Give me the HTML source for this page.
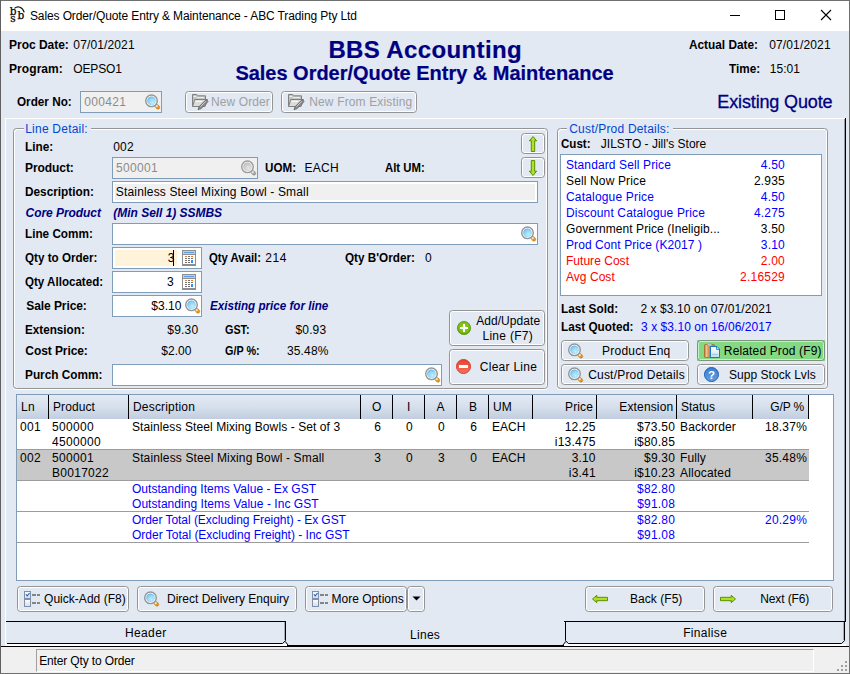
<!DOCTYPE html>
<html lang="en">
<head>
<meta charset="utf-8">
<title>Sales Order/Quote Entry &amp; Maintenance - ABC Trading Pty Ltd</title>
<style>
html,body{margin:0;padding:0;}
body{width:850px;height:674px;overflow:hidden;background:#e2e9f3;}
#w{position:relative;width:850px;height:674px;overflow:hidden;background:#e2e9f3;font-family:"Liberation Sans",sans-serif;font-size:12px;line-height:14px;color:#000;}
#w div{position:absolute;box-sizing:border-box;}
.t{position:absolute;white-space:pre;}
.b{font-weight:bold;}
.i{font-style:italic;}
.ic{position:absolute;overflow:visible;}
</style>
</head>
<body>
<div id="w">

<svg width="0" height="0" style="position:absolute">
<defs>
<radialGradient id="lens" cx="0.62" cy="0.7" r="0.85"><stop offset="0" stop-color="#bcf0fc"/><stop offset="0.55" stop-color="#92d4f6"/><stop offset="1" stop-color="#4aa0ea"/></radialGradient>
<radialGradient id="lensG" cx="0.62" cy="0.7" r="0.8"><stop offset="0" stop-color="#e6e6e6"/><stop offset="0.5" stop-color="#d2d2d2"/><stop offset="1" stop-color="#b4b4b4"/></radialGradient>
<linearGradient id="gUp" x1="0" x2="1" y1="0" y2="0"><stop offset="0" stop-color="#7cb404"/><stop offset="0.5" stop-color="#bce42c"/><stop offset="1" stop-color="#7cb404"/></linearGradient>
<linearGradient id="gLR" x1="0" x2="0" y1="0" y2="1"><stop offset="0" stop-color="#7cb404"/><stop offset="0.5" stop-color="#bce42c"/><stop offset="1" stop-color="#7cb404"/></linearGradient>
<radialGradient id="gPlus" cx="0.5" cy="0.45" r="0.6"><stop offset="0" stop-color="#94d41c"/><stop offset="0.7" stop-color="#78bc10"/><stop offset="1" stop-color="#4c8c08"/></radialGradient>
<linearGradient id="gMinus" x1="0" x2="0" y1="0" y2="1"><stop offset="0" stop-color="#e4442c"/><stop offset="1" stop-color="#f87060"/></linearGradient>
<linearGradient id="gHelp" x1="0" x2="0" y1="0" y2="1"><stop offset="0" stop-color="#3c7cd0"/><stop offset="1" stop-color="#60a0e0"/></linearGradient>
<linearGradient id="gBoard" x1="0" x2="1" y1="0" y2="0"><stop offset="0" stop-color="#c07830"/><stop offset="0.2" stop-color="#f0c090"/><stop offset="0.45" stop-color="#d08c48"/><stop offset="1" stop-color="#c88038"/></linearGradient>
<linearGradient id="gPage" x1="0" x2="0" y1="0" y2="1"><stop offset="0" stop-color="#ffffff"/><stop offset="1" stop-color="#c4e0f0"/></linearGradient>
<linearGradient id="gBox" x1="0" x2="0" y1="0" y2="1"><stop offset="0" stop-color="#ffffff"/><stop offset="1" stop-color="#d4dce8"/></linearGradient>
</defs></svg>
<div style="left:0px;top:0px;width:850px;height:31px;background:#fff;"></div>
<svg class="ic" style="left:9px;top:5px" width="18" height="18" viewBox="0 0 18 18"><path d="M5.4 3.4 C8.8 0.6 13.6 1.8 15.2 7.4" fill="none" stroke="#111" stroke-width="1.2"/><g font-family="DejaVu Serif, serif" fill="#000" stroke="#000" stroke-width="0.25"><text x="0.8" y="9.8" font-size="10.5">b</text><text x="8.4" y="14" font-size="10.5">b</text><text x="1.2" y="17" font-size="10.5">s</text></g></svg>
<span class="t" style="left:29.96px;top:9px;letter-spacing:-0.112px;color:#000;">Sales Order/Quote Entry &amp; Maintenance - ABC Trading Pty Ltd</span>
<svg class="ic" style="left:719px;top:0" width="130" height="31" viewBox="0 0 130 31"><path d="M11 15.5H21" stroke="#000" stroke-width="1"/><rect x="56.5" y="10.5" width="9" height="9" fill="none" stroke="#000" stroke-width="1"/><path d="M102 10L112 20M112 10L102 20" stroke="#000" stroke-width="1.1"/></svg>
<span class="t b" style="left:9.00px;top:38px;letter-spacing:-0.018px;">Proc Date:</span>
<span class="t" style="left:73.33px;top:38px;letter-spacing:0.133px;">07/01/2021</span>
<span class="t b" style="left:9.00px;top:62px;letter-spacing:0.073px;">Program:</span>
<span class="t" style="left:73.23px;top:62px;letter-spacing:-0.120px;">OEPSO1</span>
<span class="t b" style="left:328.39px;top:36px;font-size:24px;line-height:27px;letter-spacing:0.376px;color:#000080;-webkit-text-stroke:0.2px #000080;">BBS Accounting</span>
<span class="t b" style="left:235.42px;top:62px;font-size:20px;line-height:22px;letter-spacing:-0.020px;color:#000080;-webkit-text-stroke:0.2px #000080;">Sales Order/Quote Entry &amp; Maintenance</span>
<span class="t b" style="left:688.91px;top:38px;transform:scaleX(0.9845);transform-origin:0 0;">Actual Date:</span>
<span class="t" style="left:769.13px;top:38px;letter-spacing:0.155px;">07/01/2021</span>
<span class="t b" style="left:729.47px;top:62px;transform:scaleX(0.9800);transform-origin:0 0;">Time:</span>
<span class="t" style="left:769.69px;top:62px;letter-spacing:0.068px;">15:01</span>
<span class="t" style="left:717.32px;top:92px;font-size:18px;line-height:20px;letter-spacing:-0.137px;color:#000080;-webkit-text-stroke:0.3px #000080;">Existing Quote</span>
<span class="t b" style="left:17.12px;top:95px;transform:scaleX(0.9769);transform-origin:0 0;">Order No:</span>
<div style="left:80px;top:91px;width:82px;height:22px;border:1px solid #7f9db9;background:#f0f0f0;"></div>
<span class="t" style="left:84.13px;top:95px;letter-spacing:0.362px;color:#8c8c8c;">000421</span>
<svg class="ic" style="left:145px;top:94px" width="16" height="16" viewBox="0 0 16 16"><path d="M10.2 10.5 L12.2 12.5" stroke="#bcbcbc" stroke-width="2.6"/><ellipse cx="12.5" cy="12.9" rx="2.5" ry="1.9" transform="rotate(45 12.5 12.9)" fill="#e4941c" stroke="#b87814" stroke-width="0.5"/><circle cx="11.7" cy="12.1" r="1.2" fill="#eee6dc"/><circle cx="6.5" cy="6.8" r="5.8" fill="#fdfdfd" stroke="#959595" stroke-width="1.45"/><circle cx="6.5" cy="6.8" r="4.35" fill="url(#lens)"/></svg>
<div style="left:185px;top:91px;width:88px;height:22px;border:1px solid #959595;border-radius:3.5px;box-shadow:inset 0 0 0 1px #fff;"></div>
<svg class="ic" style="left:192px;top:94px" width="16" height="16" viewBox="0 0 16 16"><path d="M0.5 12.5 V0.5 H4.6 L5.6 1.8 H13.5 V6" fill="#c2c2c2" stroke="#808080"/><path d="M1.5 2.5 H4 L5 3.6 H12" fill="none" stroke="#f0f0f0" stroke-width="1"/><path d="M0.6 12.5 L2.8 5.5 H15.5 L13 12.5 Z" fill="#dcdcdc" stroke="#808080"/><path d="M3.6 7.5 H10" stroke="#f8f8f8" stroke-width="1"/><path d="M14.2 5.6 L7.2 12.6 L6 15.6 L9.2 14.6 L16 7.6 Z" fill="#909090" stroke="#5c5c5c" stroke-width="0.8"/><path d="M13.6 7.4 L8.6 12.4" stroke="#d8d8d8" stroke-width="0.8"/></svg>
<span class="t" style="left:211.02px;top:95px;letter-spacing:0.096px;color:#a0a0a0;">New Order</span>
<div style="left:281px;top:91px;width:136px;height:22px;border:1px solid #959595;border-radius:3.5px;box-shadow:inset 0 0 0 1px #fff;"></div>
<svg class="ic" style="left:288px;top:94px" width="16" height="16" viewBox="0 0 16 16"><path d="M0.5 12.5 V0.5 H4.6 L5.6 1.8 H13.5 V6" fill="#c2c2c2" stroke="#808080"/><path d="M1.5 2.5 H4 L5 3.6 H12" fill="none" stroke="#f0f0f0" stroke-width="1"/><path d="M0.6 12.5 L2.8 5.5 H15.5 L13 12.5 Z" fill="#dcdcdc" stroke="#808080"/><path d="M3.6 7.5 H10" stroke="#f8f8f8" stroke-width="1"/><path d="M14.2 5.6 L7.2 12.6 L6 15.6 L9.2 14.6 L16 7.6 Z" fill="#909090" stroke="#5c5c5c" stroke-width="0.8"/><path d="M13.6 7.4 L8.6 12.4" stroke="#d8d8d8" stroke-width="0.8"/></svg>
<span class="t" style="left:309.22px;top:95px;letter-spacing:0.148px;color:#a0a0a0;">New From Existing</span>
<div style="left:5px;top:118px;width:841px;height:1px;background:#fff;"></div>
<div style="left:5px;top:118px;width:1px;height:527px;background:#fff;"></div>
<div style="left:845px;top:118px;width:1px;height:504px;background:#000;"></div>
<div style="left:844px;top:119px;width:1px;height:502px;background:#9a9ea6;"></div>
<div style="left:6px;top:621px;width:280px;height:1px;background:#000;"></div>
<div style="left:564px;top:621px;width:282px;height:1px;background:#000;"></div>
<div style="left:13px;top:128px;width:535px;height:261px;border:1px solid #959595;border-radius:3.5px;box-shadow:inset 1px 1px 0 0 #fff, inset -1px 0 0 0 #fff, 0 1px 0 0 #fff;"></div>
<div style="left:24px;top:126px;width:67px;height:6px;background:#e2e9f3;"></div>
<span class="t" style="left:25.22px;top:122px;letter-spacing:0.222px;color:#0046d5;">Line Detail:</span>
<span class="t b" style="left:25.01px;top:140px;transform:scaleX(0.9848);transform-origin:0 0;">Line:</span>
<span class="t" style="left:113.13px;top:140px;letter-spacing:0.326px;">002</span>
<span class="t b" style="left:25.00px;top:161px;letter-spacing:-0.068px;">Product:</span>
<div style="left:112px;top:157px;width:146px;height:22px;border:1px solid #7f9db9;background:#f0f0f0;"></div>
<span class="t" style="left:116.12px;top:161px;letter-spacing:0.326px;color:#8c8c8c;">500001</span>
<svg class="ic" style="left:241px;top:160px" width="16" height="16" viewBox="0 0 16 16"><path d="M10.2 10.5 L12.2 12.5" stroke="#bcbcbc" stroke-width="2.6"/><ellipse cx="12.5" cy="12.9" rx="2.5" ry="1.9" transform="rotate(45 12.5 12.9)" fill="#a4a4a4" stroke="#8c8c8c" stroke-width="0.5"/><circle cx="11.7" cy="12.1" r="1.2" fill="#e8e8e8"/><circle cx="6.5" cy="6.8" r="5.8" fill="#fafafa" stroke="#9c9c9c" stroke-width="1.45"/><circle cx="6.5" cy="6.8" r="4.35" fill="url(#lensG)"/></svg>
<span class="t b" style="left:264.80px;top:161px;transform:scaleX(0.9695);transform-origin:0 0;">UOM:</span>
<span class="t" style="left:304.42px;top:161px;letter-spacing:0.274px;">EACH</span>
<span class="t b" style="left:385.12px;top:161px;transform:scaleX(0.9449);transform-origin:0 0;">Alt UM:</span>
<div style="left:521px;top:133px;width:24px;height:21px;border:1px solid #959595;border-radius:3.5px;box-shadow:inset 0 0 0 1px #fff;"></div>
<svg class="ic" style="left:525px;top:136px" width="16" height="16" viewBox="0 0 16 16"><path d="M8 0.5 L11.7 4.8 L9.7 4.8 L9.7 15.5 L6.3 15.5 L6.3 4.8 L4.3 4.8 Z" fill="url(#gUp)" stroke="#5a9404" stroke-width="1" stroke-linejoin="round"/></svg>
<div style="left:521px;top:157px;width:24px;height:21px;border:1px solid #959595;border-radius:3.5px;box-shadow:inset 0 0 0 1px #fff;"></div>
<svg class="ic" style="left:525px;top:160px" width="16" height="16" viewBox="0 0 16 16"><g transform="rotate(180 8 8)"><path d="M8 0.5 L11.7 4.8 L9.7 4.8 L9.7 15.5 L6.3 15.5 L6.3 4.8 L4.3 4.8 Z" fill="url(#gUp)" stroke="#5a9404" stroke-width="1" stroke-linejoin="round"/></g></svg>
<span class="t b" style="left:25.01px;top:185px;transform:scaleX(0.9831);transform-origin:0 0;">Description:</span>
<div style="left:112px;top:181px;width:426px;height:22px;border:1px solid #7f9db9;background:#fff;"></div>
<div style="left:115px;top:184px;width:420px;height:16px;background:#f0f0f0;"></div>
<span class="t" style="left:115.86px;top:185px;letter-spacing:0.157px;">Stainless Steel Mixing Bowl - Small</span>
<span class="t b i" style="left:25.61px;top:206px;letter-spacing:-0.067px;color:#000080;">Core Product</span>
<span class="t b i" style="left:113.37px;top:206px;letter-spacing:-0.035px;color:#000080;">(Min Sell 1) SSMBS</span>
<span class="t b" style="left:25.01px;top:227px;transform:scaleX(0.9781);transform-origin:0 0;">Line Comm:</span>
<div style="left:112px;top:223px;width:426px;height:22px;border:1px solid #7f9db9;background:#fff;"></div>
<svg class="ic" style="left:521px;top:226px" width="16" height="16" viewBox="0 0 16 16"><path d="M10.2 10.5 L12.2 12.5" stroke="#bcbcbc" stroke-width="2.6"/><ellipse cx="12.5" cy="12.9" rx="2.5" ry="1.9" transform="rotate(45 12.5 12.9)" fill="#e4941c" stroke="#b87814" stroke-width="0.5"/><circle cx="11.7" cy="12.1" r="1.2" fill="#eee6dc"/><circle cx="6.5" cy="6.8" r="5.8" fill="#fdfdfd" stroke="#959595" stroke-width="1.45"/><circle cx="6.5" cy="6.8" r="4.35" fill="url(#lens)"/></svg>
<span class="t b" style="left:25.32px;top:251px;transform:scaleX(0.9709);transform-origin:0 0;">Qty to Order:</span>
<div style="left:112px;top:247px;width:90px;height:22px;border:1px solid #7f9db9;background:#fff;"></div>
<div style="left:115px;top:250px;width:62px;height:16px;background:#fff3dc;"></div>
<span class="t" style="left:167.65px;top:251px;letter-spacing:0.326px;">3</span>
<div style="left:173px;top:250px;width:1px;height:16px;background:#000;"></div>
<svg class="ic" style="left:182px;top:250px" width="14" height="16" viewBox="0 0 14 16"><rect x="0" y="0" width="14" height="16" fill="#8e8e8e"/><rect x="1" y="1" width="12" height="3" fill="#acd4fc"/><rect x="2" y="2" width="10" height="1" fill="#5c9ce8"/><rect x="1" y="5" width="12" height="9" fill="#fff"/><g fill="#f47820"><rect x="3" y="6" width="2" height="1"/><rect x="9" y="6" width="2" height="1"/></g><g fill="#707070"><rect x="6" y="6" width="2" height="1"/><rect x="3" y="8" width="2" height="1"/><rect x="6" y="8" width="2" height="1"/><rect x="9" y="8" width="2" height="1"/><rect x="3" y="10" width="2" height="1"/><rect x="6" y="10" width="2" height="1"/><rect x="3" y="12" width="2" height="1"/><rect x="6" y="12" width="2" height="1"/></g><rect x="9" y="10" width="2" height="3" fill="#3c8ce8"/></svg>
<span class="t b" style="left:208.94px;top:251px;transform:scaleX(0.9435);transform-origin:0 0;">Qty Avail:</span>
<span class="t" style="left:265.20px;top:251px;letter-spacing:0.567px;">214</span>
<span class="t b" style="left:345.12px;top:251px;transform:scaleX(0.9773);transform-origin:0 0;">Qty B'Order:</span>
<span class="t" style="left:424.93px;top:251px;letter-spacing:0.326px;">0</span>
<span class="t b" style="left:25.33px;top:275px;transform:scaleX(0.9649);transform-origin:0 0;">Qty Allocated:</span>
<div style="left:112px;top:271px;width:90px;height:22px;border:1px solid #7f9db9;background:#fff;"></div>
<span class="t" style="left:167.05px;top:275px;letter-spacing:0.326px;">3</span>
<svg class="ic" style="left:182px;top:274px" width="14" height="16" viewBox="0 0 14 16"><rect x="0" y="0" width="14" height="16" fill="#8e8e8e"/><rect x="1" y="1" width="12" height="3" fill="#acd4fc"/><rect x="2" y="2" width="10" height="1" fill="#5c9ce8"/><rect x="1" y="5" width="12" height="9" fill="#fff"/><g fill="#f47820"><rect x="3" y="6" width="2" height="1"/><rect x="9" y="6" width="2" height="1"/></g><g fill="#707070"><rect x="6" y="6" width="2" height="1"/><rect x="3" y="8" width="2" height="1"/><rect x="6" y="8" width="2" height="1"/><rect x="9" y="8" width="2" height="1"/><rect x="3" y="10" width="2" height="1"/><rect x="6" y="10" width="2" height="1"/><rect x="3" y="12" width="2" height="1"/><rect x="6" y="12" width="2" height="1"/></g><rect x="9" y="10" width="2" height="3" fill="#3c8ce8"/></svg>
<span class="t b" style="left:26.25px;top:299px;letter-spacing:-0.077px;">Sale Price:</span>
<div style="left:112px;top:295px;width:90px;height:22px;border:1px solid #7f9db9;background:#fff;"></div>
<span class="t" style="left:151.27px;top:299px;letter-spacing:0.042px;">$3.10</span>
<svg class="ic" style="left:185px;top:298px" width="16" height="16" viewBox="0 0 16 16"><path d="M10.2 10.5 L12.2 12.5" stroke="#bcbcbc" stroke-width="2.6"/><ellipse cx="12.5" cy="12.9" rx="2.5" ry="1.9" transform="rotate(45 12.5 12.9)" fill="#e4941c" stroke="#b87814" stroke-width="0.5"/><circle cx="11.7" cy="12.1" r="1.2" fill="#eee6dc"/><circle cx="6.5" cy="6.8" r="5.8" fill="#fdfdfd" stroke="#959595" stroke-width="1.45"/><circle cx="6.5" cy="6.8" r="4.35" fill="url(#lens)"/></svg>
<span class="t b i" style="left:209.80px;top:299px;color:#000080;transform:scaleX(0.9689);transform-origin:0 0;">Existing price for line</span>
<span class="t b" style="left:25.02px;top:323px;transform:scaleX(0.9750);transform-origin:0 0;">Extension:</span>
<span class="t" style="left:167.27px;top:323px;letter-spacing:0.192px;">$9.30</span>
<span class="t b" style="left:224.96px;top:323px;transform:scaleX(0.8994);transform-origin:0 0;">GST:</span>
<span class="t" style="left:295.47px;top:323px;letter-spacing:0.157px;">$0.93</span>
<span class="t b" style="left:25.31px;top:344px;letter-spacing:-0.081px;">Cost Price:</span>
<span class="t" style="left:161.27px;top:344px;letter-spacing:0.042px;">$2.00</span>
<span class="t b" style="left:224.96px;top:344px;transform:scaleX(0.8994);transform-origin:0 0;">G/P %:</span>
<span class="t" style="left:286.94px;top:344px;letter-spacing:0.157px;">35.48%</span>
<span class="t b" style="left:25.01px;top:368px;transform:scaleX(0.9841);transform-origin:0 0;">Purch Comm:</span>
<div style="left:112px;top:364px;width:330px;height:22px;border:1px solid #7f9db9;background:#fff;"></div>
<svg class="ic" style="left:425px;top:367px" width="16" height="16" viewBox="0 0 16 16"><path d="M10.2 10.5 L12.2 12.5" stroke="#bcbcbc" stroke-width="2.6"/><ellipse cx="12.5" cy="12.9" rx="2.5" ry="1.9" transform="rotate(45 12.5 12.9)" fill="#e4941c" stroke="#b87814" stroke-width="0.5"/><circle cx="11.7" cy="12.1" r="1.2" fill="#eee6dc"/><circle cx="6.5" cy="6.8" r="5.8" fill="#fdfdfd" stroke="#959595" stroke-width="1.45"/><circle cx="6.5" cy="6.8" r="4.35" fill="url(#lens)"/></svg>
<div style="left:449px;top:310px;width:96px;height:36px;border:1px solid #959595;border-radius:3.5px;box-shadow:inset 0 0 0 1px #fff;"></div>
<svg class="ic" style="left:457px;top:321px" width="14" height="14" viewBox="0 0 14 14"><circle cx="7" cy="7" r="6.6" fill="url(#gPlus)" stroke="#549410" stroke-width="0.8"/><path d="M7 3V11M3 7H11" stroke="#fff" stroke-width="2"/></svg>
<span class="t" style="left:476.18px;top:314px;letter-spacing:0.064px;">Add/Update</span>
<span class="t" style="left:482.42px;top:329px;letter-spacing:0.301px;">Line (F7)</span>
<div style="left:449px;top:349px;width:96px;height:36px;border:1px solid #959595;border-radius:3.5px;box-shadow:inset 0 0 0 1px #fff;"></div>
<svg class="ic" style="left:456px;top:359px" width="15" height="15" viewBox="0 0 15 15"><circle cx="7.5" cy="7.5" r="7" fill="url(#gMinus)" stroke="#d83c28" stroke-width="1"/><rect x="3" y="6" width="9" height="3" fill="#fff"/></svg>
<span class="t" style="left:479.79px;top:360px;letter-spacing:0.272px;">Clear Line</span>
<div style="left:557px;top:128px;width:271px;height:261px;border:1px solid #959595;border-radius:3.5px;box-shadow:inset 1px 1px 0 0 #fff, inset -1px 0 0 0 #fff, 0 1px 0 0 #fff;"></div>
<div style="left:567px;top:126px;width:106px;height:6px;background:#e2e9f3;"></div>
<span class="t" style="left:569.19px;top:122px;letter-spacing:0.200px;color:#0046d5;">Cust/Prod Details:</span>
<span class="t b" style="left:561.33px;top:137px;transform:scaleX(0.9616);transform-origin:0 0;">Cust:</span>
<span class="t" style="left:600.81px;top:137px;">JILSTO - Jill's Store</span>
<div style="left:560px;top:154px;width:262px;height:142px;border:1px solid #7f9db9;background:#fff;"></div>
<span class="t" style="left:566.00px;top:158px;letter-spacing:0.120px;color:#0000ff;">Standard Sell Price</span>
<span class="t" style="left:760.83px;top:158px;letter-spacing:0.161px;color:#0000ff;">4.50</span>
<span class="t" style="left:566.00px;top:174px;letter-spacing:0.141px;color:#000;">Sell Now Price</span>
<span class="t" style="left:753.90px;top:174px;letter-spacing:0.194px;color:#000;">2.935</span>
<span class="t" style="left:566.00px;top:190px;letter-spacing:0.174px;color:#0000ff;">Catalogue Price</span>
<span class="t" style="left:760.83px;top:190px;letter-spacing:0.161px;color:#0000ff;">4.50</span>
<span class="t" style="left:566.00px;top:206px;letter-spacing:0.150px;color:#0000ff;">Discount Catalogue Price</span>
<span class="t" style="left:753.90px;top:206px;letter-spacing:0.194px;color:#0000ff;">4.275</span>
<span class="t" style="left:566.00px;top:222px;letter-spacing:0.067px;color:#000;">Government Price (Ineligib...</span>
<span class="t" style="left:760.83px;top:222px;letter-spacing:0.161px;color:#000;">3.50</span>
<span class="t" style="left:566.00px;top:238px;letter-spacing:0.081px;color:#0000ff;">Prod Cont Price (K2017 )</span>
<span class="t" style="left:760.83px;top:238px;letter-spacing:0.161px;color:#0000ff;">3.10</span>
<span class="t" style="left:566.00px;top:254px;letter-spacing:0.028px;color:#ff0000;">Future Cost</span>
<span class="t" style="left:760.83px;top:254px;letter-spacing:0.161px;color:#ff0000;">2.00</span>
<span class="t" style="left:566.00px;top:270px;letter-spacing:0.039px;color:#ff0000;">Avg Cost</span>
<span class="t" style="left:740.00px;top:270px;letter-spacing:0.232px;color:#ff0000;">2.16529</span>
<span class="t b" style="left:561.01px;top:302px;transform:scaleX(0.9849);transform-origin:0 0;">Last Sold:</span>
<span class="t" style="left:640.40px;top:302px;letter-spacing:0.079px;">2 x $3.10 on 07/01/2021</span>
<span class="t b" style="left:561.01px;top:320px;transform:scaleX(0.9800);transform-origin:0 0;">Last Quoted:</span>
<span class="t" style="left:641.04px;top:320px;letter-spacing:0.051px;color:#0000ff;">3 x $3.10 on 16/06/2017</span>
<div style="left:561px;top:340px;width:128px;height:21px;border:1px solid #959595;border-radius:3.5px;box-shadow:inset 0 0 0 1px #fff;"></div>
<svg class="ic" style="left:568px;top:343px" width="16" height="16" viewBox="0 0 16 16"><path d="M10.2 10.5 L12.2 12.5" stroke="#bcbcbc" stroke-width="2.6"/><ellipse cx="12.5" cy="12.9" rx="2.5" ry="1.9" transform="rotate(45 12.5 12.9)" fill="#e4941c" stroke="#b87814" stroke-width="0.5"/><circle cx="11.7" cy="12.1" r="1.2" fill="#eee6dc"/><circle cx="6.5" cy="6.8" r="5.8" fill="#fdfdfd" stroke="#959595" stroke-width="1.45"/><circle cx="6.5" cy="6.8" r="4.35" fill="url(#lens)"/></svg>
<span class="t" style="left:602.12px;top:344px;letter-spacing:0.211px;">Product Enq</span>
<div style="left:697px;top:340px;width:128px;height:21px;background:#84da84;"></div>
<div style="left:697px;top:340px;width:128px;height:21px;border:1px solid #959595;border-radius:3.5px;box-shadow:inset 0 0 0 1px #fff;box-shadow:inset 0 0 0 1px #c4f0c4;border-color:#7c947c;"></div>
<svg class="ic" style="left:704px;top:343px" width="16" height="16" viewBox="0 0 16 16"><rect x="0.5" y="1.5" width="10" height="13" rx="0.8" fill="url(#gBoard)" stroke="#a86828" stroke-width="0.8"/><rect x="3.4" y="0.3" width="4.4" height="2.6" rx="0.8" fill="#c4c8d0" stroke="#9094a0" stroke-width="0.6"/><path d="M6.5 3.5 H13 L15.5 6 V14.5 H6.5 Z" fill="url(#gPage)" stroke="#1c74c4" stroke-width="1"/><path d="M12.6 3.8 V6.4 H15.2" fill="none" stroke="#1c74c4" stroke-width="0.9"/><path d="M8 11.5H14" stroke="#a4cce4" stroke-width="1.4"/></svg>
<span class="t" style="left:723.82px;top:344px;letter-spacing:0.147px;">Related Prod (F9)</span>
<div style="left:561px;top:364px;width:128px;height:21px;border:1px solid #959595;border-radius:3.5px;box-shadow:inset 0 0 0 1px #fff;"></div>
<svg class="ic" style="left:568px;top:367px" width="16" height="16" viewBox="0 0 16 16"><path d="M10.2 10.5 L12.2 12.5" stroke="#bcbcbc" stroke-width="2.6"/><ellipse cx="12.5" cy="12.9" rx="2.5" ry="1.9" transform="rotate(45 12.5 12.9)" fill="#e4941c" stroke="#b87814" stroke-width="0.5"/><circle cx="11.7" cy="12.1" r="1.2" fill="#eee6dc"/><circle cx="6.5" cy="6.8" r="5.8" fill="#fdfdfd" stroke="#959595" stroke-width="1.45"/><circle cx="6.5" cy="6.8" r="4.35" fill="url(#lens)"/></svg>
<span class="t" style="left:588.19px;top:368px;letter-spacing:0.198px;">Cust/Prod Details</span>
<div style="left:697px;top:364px;width:128px;height:21px;border:1px solid #959595;border-radius:3.5px;box-shadow:inset 0 0 0 1px #fff;"></div>
<svg class="ic" style="left:704px;top:367px" width="15" height="15" viewBox="0 0 15 15"><circle cx="7.5" cy="7.5" r="7" fill="url(#gHelp)" stroke="#1c5cbc" stroke-width="1"/><text x="7.6" y="11.6" text-anchor="middle" font-family="Liberation Sans, sans-serif" font-weight="bold" font-size="11.5" fill="#fff">?</text></svg>
<span class="t" style="left:728.96px;top:368px;letter-spacing:0.045px;">Supp Stock Lvls</span>
<div style="left:16px;top:394px;width:818px;height:187px;border:1px solid #7f9db9;background:#fff;"></div>
<div style="left:17px;top:395px;width:792px;height:24px;background:linear-gradient(#e3eaf4,#d6dfec 50%,#c1cee0);"></div>
<div style="left:48px;top:395px;width:1px;height:24px;background:#000;"></div>
<div style="left:128px;top:395px;width:1px;height:24px;background:#000;"></div>
<div style="left:360px;top:395px;width:1px;height:24px;background:#000;"></div>
<div style="left:392px;top:395px;width:1px;height:24px;background:#000;"></div>
<div style="left:424px;top:395px;width:1px;height:24px;background:#000;"></div>
<div style="left:456px;top:395px;width:1px;height:24px;background:#000;"></div>
<div style="left:488px;top:395px;width:1px;height:24px;background:#000;"></div>
<div style="left:532px;top:395px;width:1px;height:24px;background:#000;"></div>
<div style="left:596px;top:395px;width:1px;height:24px;background:#000;"></div>
<div style="left:676px;top:395px;width:1px;height:24px;background:#000;"></div>
<div style="left:752px;top:395px;width:1px;height:24px;background:#000;"></div>
<div style="left:808px;top:395px;width:1px;height:24px;background:#000;"></div>
<span class="t" style="left:21.00px;top:400px;letter-spacing:0.326px;">Ln</span>
<span class="t" style="left:53.00px;top:400px;letter-spacing:0.092px;">Product</span>
<span class="t" style="left:133.00px;top:400px;letter-spacing:0.180px;">Description</span>
<span class="t" style="left:371.94px;top:400px;letter-spacing:-0.334px;">O</span>
<span class="t" style="left:406.93px;top:400px;letter-spacing:-0.334px;">I</span>
<span class="t" style="left:436.60px;top:400px;">A</span>
<span class="t" style="left:469.02px;top:400px;">B</span>
<span class="t" style="left:493.00px;top:400px;letter-spacing:0.169px;">UM</span>
<span class="t" style="left:565.07px;top:400px;letter-spacing:0.132px;">Price</span>
<span class="t" style="left:619.32px;top:400px;letter-spacing:0.145px;">Extension</span>
<span class="t" style="left:681.00px;top:400px;">Status</span>
<span class="t" style="left:770.29px;top:400px;letter-spacing:-0.135px;">G/P %</span>
<div style="left:17px;top:450px;width:792px;height:30px;background:#c8c8c8;"></div>
<div style="left:17px;top:449px;width:792px;height:1px;background:#9c9c9c;"></div>
<div style="left:17px;top:480px;width:792px;height:1px;background:#9c9c9c;"></div>
<div style="left:17px;top:511px;width:792px;height:1px;background:#9c9c9c;"></div>
<div style="left:17px;top:542px;width:792px;height:1px;background:#9c9c9c;"></div>
<span class="t" style="left:20.00px;top:420px;letter-spacing:0.326px;">001</span>
<span class="t" style="left:52.00px;top:420px;letter-spacing:0.326px;">500000</span>
<span class="t" style="left:52.00px;top:435px;letter-spacing:0.326px;">4500000</span>
<span class="t" style="left:132.00px;top:420px;letter-spacing:0.089px;">Stainless Steel Mixing Bowls - Set of 3</span>
<span class="t" style="left:374.22px;top:420px;letter-spacing:0.326px;">6</span>
<span class="t" style="left:406.06px;top:420px;letter-spacing:0.326px;">0</span>
<span class="t" style="left:438.06px;top:420px;letter-spacing:0.326px;">0</span>
<span class="t" style="left:470.22px;top:420px;letter-spacing:0.326px;">6</span>
<span class="t" style="left:492.00px;top:420px;letter-spacing:0.013px;">EACH</span>
<span class="t" style="left:564.70px;top:420px;letter-spacing:0.194px;">12.25</span>
<span class="t" style="left:554.74px;top:435px;letter-spacing:0.233px;">i13.475</span>
<span class="t" style="left:637.08px;top:420px;letter-spacing:0.216px;">$73.50</span>
<span class="t" style="left:634.14px;top:435px;letter-spacing:0.233px;">i$80.85</span>
<span class="t" style="left:680.00px;top:420px;letter-spacing:0.145px;">Backorder</span>
<span class="t" style="left:765.04px;top:420px;letter-spacing:0.217px;">18.37%</span>
<span class="t" style="left:20.00px;top:451px;letter-spacing:0.326px;">002</span>
<span class="t" style="left:52.00px;top:451px;letter-spacing:0.326px;">500001</span>
<span class="t" style="left:52.00px;top:466px;letter-spacing:0.285px;">B0017022</span>
<span class="t" style="left:132.00px;top:451px;letter-spacing:0.141px;">Stainless Steel Mixing Bowl - Small</span>
<span class="t" style="left:374.30px;top:451px;letter-spacing:0.326px;">3</span>
<span class="t" style="left:406.06px;top:451px;letter-spacing:0.326px;">0</span>
<span class="t" style="left:438.10px;top:451px;letter-spacing:0.326px;">3</span>
<span class="t" style="left:470.26px;top:451px;letter-spacing:0.326px;">0</span>
<span class="t" style="left:492.00px;top:451px;letter-spacing:0.013px;">EACH</span>
<span class="t" style="left:571.63px;top:451px;letter-spacing:0.161px;">3.10</span>
<span class="t" style="left:568.78px;top:466px;letter-spacing:0.196px;">i3.41</span>
<span class="t" style="left:644.06px;top:451px;letter-spacing:0.194px;">$9.30</span>
<span class="t" style="left:634.16px;top:466px;letter-spacing:0.233px;">i$10.23</span>
<span class="t" style="left:680.00px;top:451px;letter-spacing:0.133px;">Fully</span>
<span class="t" style="left:680.00px;top:466px;letter-spacing:0.182px;">Allocated</span>
<span class="t" style="left:765.04px;top:451px;letter-spacing:0.217px;">35.48%</span>
<span class="t" style="left:132.00px;top:482px;letter-spacing:0.026px;color:#0000ff;">Outstanding Items Value - Ex GST</span>
<span class="t" style="left:132.00px;top:497px;letter-spacing:0.044px;color:#0000ff;">Outstanding Items Value - Inc GST</span>
<span class="t" style="left:637.08px;top:482px;letter-spacing:0.216px;color:#0000ff;">$82.80</span>
<span class="t" style="left:637.14px;top:497px;letter-spacing:0.216px;color:#0000ff;">$91.08</span>
<span class="t" style="left:132.00px;top:513px;letter-spacing:-0.049px;color:#0000ff;">Order Total (Excluding Freight) - Ex GST</span>
<span class="t" style="left:132.00px;top:528px;letter-spacing:-0.008px;color:#0000ff;">Order Total (Excluding Freight) - Inc GST</span>
<span class="t" style="left:637.08px;top:513px;letter-spacing:0.216px;color:#0000ff;">$82.80</span>
<span class="t" style="left:637.14px;top:528px;letter-spacing:0.216px;color:#0000ff;">$91.08</span>
<span class="t" style="left:765.04px;top:513px;letter-spacing:0.217px;color:#0000ff;">20.29%</span>
<div style="left:17px;top:586px;width:112px;height:26px;border:1px solid #959595;border-radius:3.5px;box-shadow:inset 0 0 0 1px #fff;"></div>
<svg class="ic" style="left:24px;top:591px" width="16" height="16" viewBox="0 0 16 16"><rect x="0.5" y="0.5" width="6" height="7" fill="url(#gBox)" stroke="#8090a8"/><rect x="0.5" y="8.5" width="6" height="7" fill="url(#gBox)" stroke="#8090a8"/><path d="M1.9 3.4 L3.2 4.9 L5.6 2.2" fill="none" stroke="#1c6cd0" stroke-width="1.2"/><g fill="#848484"><rect x="8" y="3" width="4" height="2"/><rect x="13" y="3" width="3" height="2"/><rect x="8" y="11" width="4" height="2"/><rect x="13" y="11" width="3" height="2"/></g></svg>
<span class="t" style="left:44.03px;top:592px;letter-spacing:0.028px;">Quick-Add (F8)</span>
<div style="left:137px;top:586px;width:160px;height:26px;border:1px solid #959595;border-radius:3.5px;box-shadow:inset 0 0 0 1px #fff;"></div>
<svg class="ic" style="left:144px;top:591px" width="16" height="16" viewBox="0 0 16 16"><path d="M10.2 10.5 L12.2 12.5" stroke="#bcbcbc" stroke-width="2.6"/><ellipse cx="12.5" cy="12.9" rx="2.5" ry="1.9" transform="rotate(45 12.5 12.9)" fill="#e4941c" stroke="#b87814" stroke-width="0.5"/><circle cx="11.7" cy="12.1" r="1.2" fill="#eee6dc"/><circle cx="6.5" cy="6.8" r="5.8" fill="#fdfdfd" stroke="#959595" stroke-width="1.45"/><circle cx="6.5" cy="6.8" r="4.35" fill="url(#lens)"/></svg>
<span class="t" style="left:167.02px;top:592px;">Direct Delivery Enquiry</span>
<div style="left:305px;top:586px;width:102px;height:26px;border:1px solid #959595;border-radius:3.5px;box-shadow:inset 0 0 0 1px #fff;"></div>
<svg class="ic" style="left:312px;top:591px" width="16" height="16" viewBox="0 0 16 16"><rect x="0.5" y="0.5" width="6" height="7" fill="url(#gBox)" stroke="#8090a8"/><rect x="0.5" y="8.5" width="6" height="7" fill="url(#gBox)" stroke="#8090a8"/><path d="M1.9 3.4 L3.2 4.9 L5.6 2.2" fill="none" stroke="#1c6cd0" stroke-width="1.2"/><g fill="#848484"><rect x="8" y="3" width="4" height="2"/><rect x="13" y="3" width="3" height="2"/><rect x="8" y="11" width="4" height="2"/><rect x="13" y="11" width="3" height="2"/></g></svg>
<span class="t" style="left:331.62px;top:592px;">More Options</span>
<div style="left:407px;top:586px;width:18px;height:26px;border:1px solid #959595;border-radius:3.5px;box-shadow:inset 0 0 0 1px #fff;"></div>
<svg class="ic" style="left:412px;top:596px" width="9" height="5" viewBox="0 0 9 5"><path d="M0.5 0.5H8.5L4.5 4.5Z" fill="#000"/></svg>
<div style="left:585px;top:586px;width:120px;height:26px;border:1px solid #959595;border-radius:3.5px;box-shadow:inset 0 0 0 1px #fff;"></div>
<svg class="ic" style="left:592px;top:591px" width="16" height="16" viewBox="0 0 16 16"><g transform="rotate(180 8 8)"><path d="M15.5 8 L11.2 4.3 L11.2 6.3 L0.5 6.3 L0.5 9.7 L11.2 9.7 L11.2 11.7 Z" fill="url(#gLR)" stroke="#5a9404" stroke-width="1" stroke-linejoin="round"/></g></svg>
<span class="t" style="left:630.02px;top:592px;letter-spacing:0.040px;">Back (F5)</span>
<div style="left:713px;top:586px;width:120px;height:26px;border:1px solid #959595;border-radius:3.5px;box-shadow:inset 0 0 0 1px #fff;"></div>
<svg class="ic" style="left:720px;top:591px" width="16" height="16" viewBox="0 0 16 16"><path d="M15.5 8 L11.2 4.3 L11.2 6.3 L0.5 6.3 L0.5 9.7 L11.2 9.7 L11.2 11.7 Z" fill="url(#gLR)" stroke="#5a9404" stroke-width="1" stroke-linejoin="round"/></svg>
<span class="t" style="left:760.22px;top:592px;letter-spacing:-0.109px;">Next (F6)</span>
<div style="left:6px;top:644px;width:281px;height:2px;background:#fff;"></div>
<div style="left:564px;top:644px;width:282px;height:2px;background:#fff;"></div>
<div style="left:287px;top:645px;width:277px;height:1px;background:#000;"></div>
<div style="left:1px;top:646px;width:848px;height:1px;background:#000;"></div>
<svg class="ic" style="left:0;top:618px" width="850" height="30" viewBox="0 618 850 30"><g fill="none" stroke="#000" stroke-width="1"><path d="M7 643.5H282.6L285.5 640.6V621"/><path d="M285.2 641.4L288.4 645.5"/><path d="M565.5 621V640.6L568.4 643.5H841.6L844.5 640.6V622"/><path d="M565.8 641.4L562.6 645.5"/></g><path d="M284.5 622V640M843.5 622V640" stroke="#a8aeb8" stroke-width="1" fill="none"/></svg>
<span class="t" style="left:125.02px;top:626px;letter-spacing:0.365px;">Header</span>
<span class="t" style="left:410.12px;top:628px;letter-spacing:0.263px;">Lines</span>
<span class="t" style="left:683.22px;top:626px;letter-spacing:0.324px;">Finalise</span>
<div style="left:0px;top:647px;width:850px;height:27px;background:#f0f0f0;"></div>
<div style="left:36px;top:649px;width:778px;height:23px;border-top:1px solid #a0a0a0;border-left:1px solid #a0a0a0;border-right:1px solid #fff;border-bottom:1px solid #fff;"></div>
<span class="t" style="left:39.22px;top:654px;letter-spacing:-0.144px;">Enter Qty to Order</span>
<div style="left:845px;top:661px;width:2px;height:2px;background:#a0a0a0;"></div>
<div style="left:841px;top:665px;width:2px;height:2px;background:#a0a0a0;"></div>
<div style="left:845px;top:665px;width:2px;height:2px;background:#a0a0a0;"></div>
<div style="left:837px;top:669px;width:2px;height:2px;background:#a0a0a0;"></div>
<div style="left:841px;top:669px;width:2px;height:2px;background:#a0a0a0;"></div>
<div style="left:845px;top:669px;width:2px;height:2px;background:#a0a0a0;"></div>
<div style="left:0px;top:0px;width:850px;height:1px;background:#707070;"></div>
<div style="left:0px;top:0px;width:1px;height:674px;background:#606060;"></div>
<div style="left:849px;top:0px;width:1px;height:674px;background:#707070;"></div>
<div style="left:0px;top:673px;width:850px;height:1px;background:#707070;"></div>
</div>
</body>
</html>
